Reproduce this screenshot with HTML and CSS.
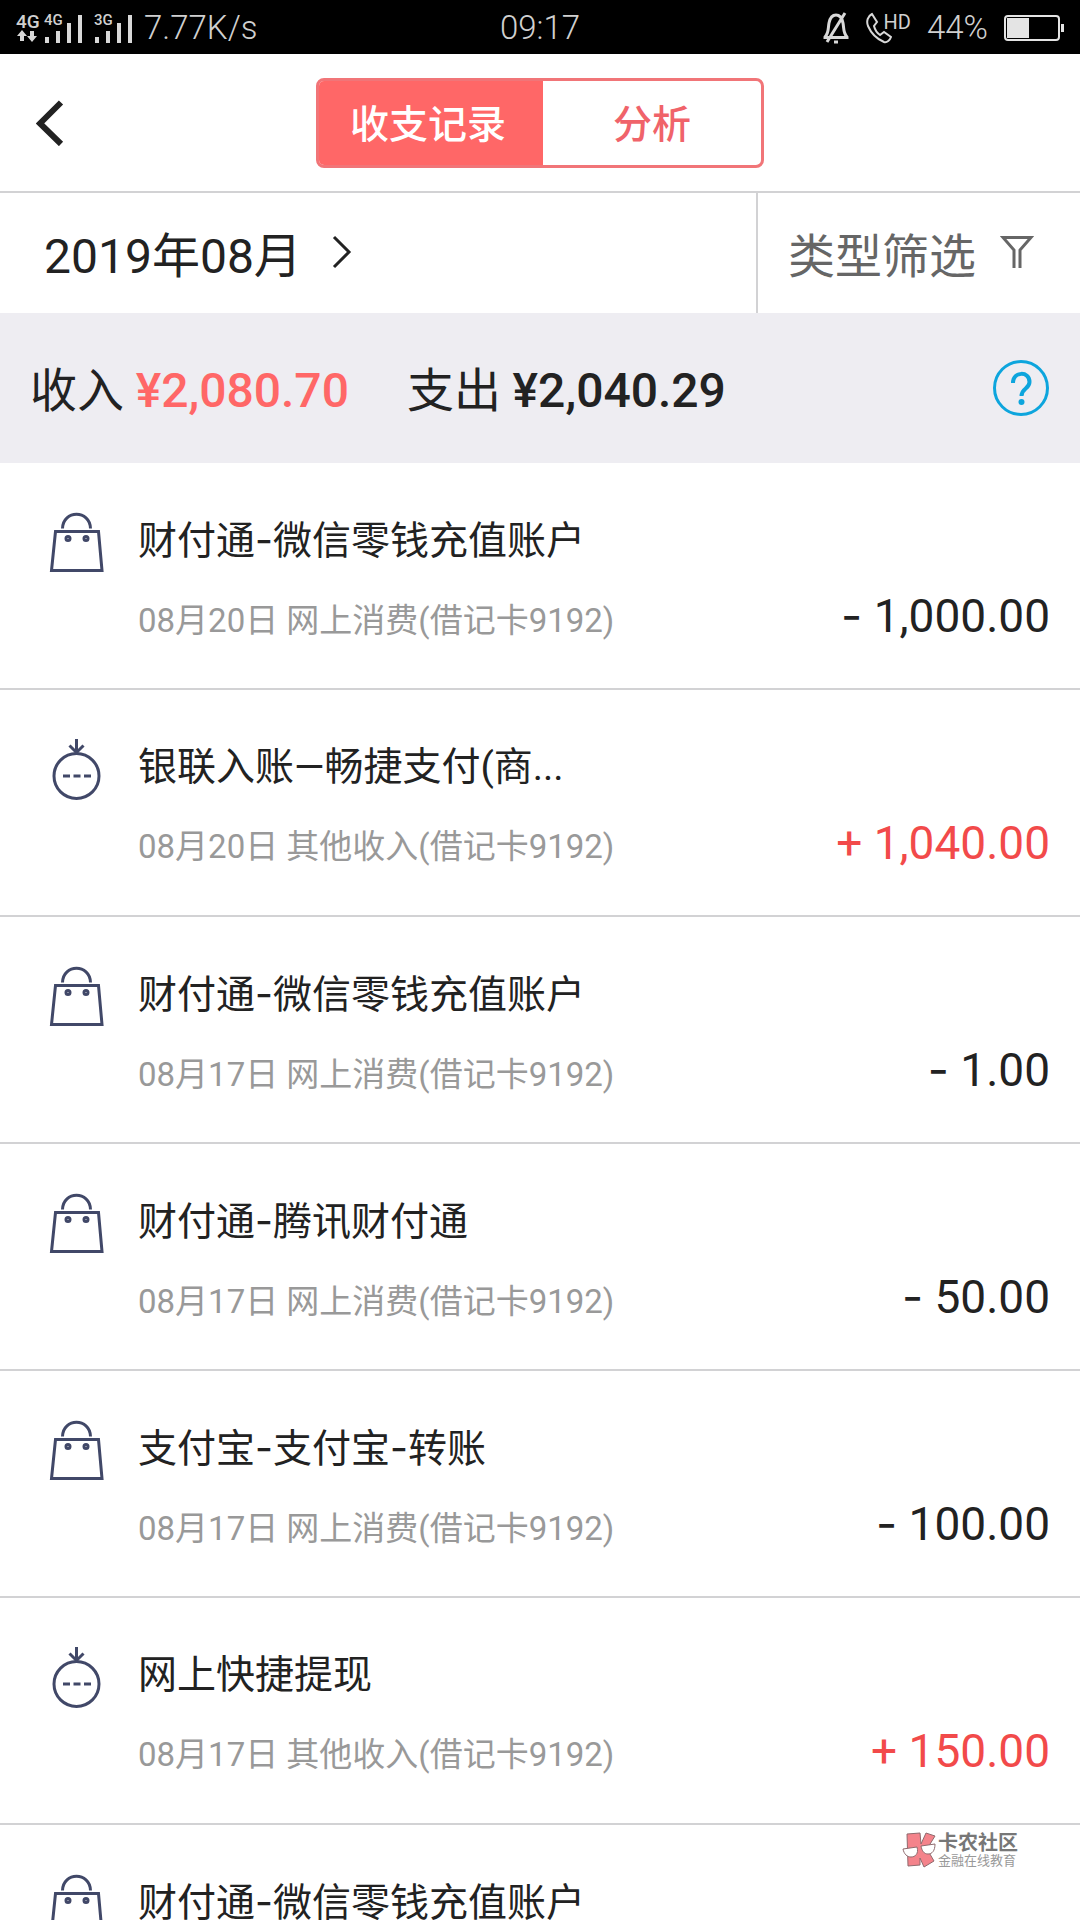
FILE: index.html
```html
<!DOCTYPE html>
<html lang="zh-CN">
<head>
<meta charset="utf-8">
<meta name="viewport" content="width=device-width, initial-scale=1">
<title>收支记录</title>
<link rel="stylesheet" href="styles.css">
</head>
<body>
<svg class="defs" aria-hidden="true">
  <symbol id="bag" viewBox="0 0 56 62">
    <path d="M13.500 17.500C14 -1.500 41 -1.500 41.500 17.500M6.500 20.500H49.500L53 59.500H2.500Z"/>
    <circle cx="19" cy="27.500" r="2"/><circle cx="37" cy="27.500" r="2"/>
  </symbol>
  <symbol id="coin" viewBox="0 0 56 62">
    <circle cx="27.500" cy="38" r="22.500"/>
    <path d="M27.500 1V14M20.500 7.500L27.500 14.500L34.500 7.500M14 38H21M24.500 38H31.500M35 38H42"/>
  </symbol>
</svg>
<div class="app">
  <header class="status">
    <div class="status-left">
      <div class="net"><span class="net-main">4G</span>
        <svg width="22" height="12" viewBox="0 0 22 12" fill="#d8d8d8"><path d="M6 0L11 6H8V11H4V6H1ZM16 12L21 6H18V1H14V6H11Z"/></svg>
      </div>
      <div class="signal"><span class="net-tag">4G</span>
        <svg width="38" height="30" viewBox="0 0 38 30" fill="#d8d8d8"><path d="M1 24H5V30H1ZM12 18H16V30H12ZM23 10H27V30H23ZM34 2H38V30H34Z"/></svg>
      </div>
      <div class="signal"><span class="net-tag">3G</span>
        <svg width="38" height="30" viewBox="0 0 38 30" fill="#d8d8d8"><path d="M1 24H5V30H1ZM12 18H16V30H12ZM23 10H27V30H23ZM34 2H38V30H34Z"/></svg>
      </div>
      <span class="speed">7.77K/s</span>
    </div>
    <span>09:17</span>
    <div class="status-right">
      <svg width="28" height="32" viewBox="0 0 28 32" fill="none" stroke="#d8d8d8" stroke-width="3"><path d="M3 25C7 21 6 16 7 11C8 6 10 3 14 3S20 6 21 11C22 16 21 21 25 25V25.500H3ZM23 1L5 30"/><path d="M12 30H16" stroke-width="3"/></svg>
      <div class="call">
        <svg width="26" height="32" viewBox="0 0 26 32" fill="none" stroke="#d8d8d8" stroke-width="2"><path d="M6 2C2 4 0 9 2 14C5 21 11 27 18 30C21 31 24 28 25 25L18 20L14 23C11 21 9 18 8 14L11 10Z"/></svg>
        <span class="hd">HD</span>
      </div>
      <span class="percent">44%</span>
      <svg width="60" height="28" viewBox="0 0 60 28"><rect x="1" y="2" width="54" height="24" rx="3" fill="none" stroke="#e4e4e4" stroke-width="2"/><path d="M3 4H25V24H3ZM57 10H60V18H57Z" fill="#e4e4e4"/></svg>
    </div>
  </header>

  <nav class="nav">
    <button class="back" aria-label="返回"><svg width="32" height="46" viewBox="0 0 32 46" fill="none" stroke="#222" stroke-width="6"><path d="M25 2.500L4 23.500L25 44"/></svg></button>
    <div class="tabs">
      <button class="tab tab-on">收支记录</button>
      <button class="tab">分析</button>
    </div>
  </nav>

  <section class="filters">
    <button class="month">2019年08月
      <svg width="20" height="34" viewBox="0 0 20 34" fill="none" stroke="#222" stroke-width="3"><path d="M2 2L17 17L2 32"/></svg>
    </button>
    <button class="type">类型筛选
      <svg width="34" height="34" viewBox="0 0 34 34" fill="none" stroke="#666" stroke-width="3"><path d="M14 33V15L3 2.500H31L20 15V33"/></svg>
    </button>
  </section>

  <section class="summary">
    <div class="total">收入 <strong class="sum income">¥2,080.70</strong></div>
    <div class="total">支出 <strong class="sum">¥2,040.29</strong></div>
    <button class="help" aria-label="帮助"><svg width="58" height="58" viewBox="0 0 58 58" fill="none" stroke="#0da5dd"><circle cx="29" cy="29" r="26.500" stroke-width="3"/><path d="M21 24C21 12 37.500 12 37.500 23C37.500 30 29.500 29 29.500 37" stroke-width="4"/><circle cx="29.500" cy="43" r="3" fill="#0da5dd" stroke="none"/></svg></button>
  </section>

  <ul class="list">
    <li class="row"><svg class="icon"><use href="#bag"/></svg><div class="info"><h2>财付通<span class="dash">-</span>微信零钱充值账户</h2><p>08月20日 网上消费(借记卡9192)</p></div><span class="amount"><span class="dash">-</span> 1,000.00</span></li>
    <li class="row"><svg class="icon"><use href="#coin"/></svg><div class="info"><h2>银联入账—畅捷支付(商...</h2><p>08月20日 其他收入(借记卡9192)</p></div><span class="amount plus">+ 1,040.00</span></li>
    <li class="row"><svg class="icon"><use href="#bag"/></svg><div class="info"><h2>财付通<span class="dash">-</span>微信零钱充值账户</h2><p>08月17日 网上消费(借记卡9192)</p></div><span class="amount"><span class="dash">-</span> 1.00</span></li>
    <li class="row"><svg class="icon"><use href="#bag"/></svg><div class="info"><h2>财付通<span class="dash">-</span>腾讯财付通</h2><p>08月17日 网上消费(借记卡9192)</p></div><span class="amount"><span class="dash">-</span> 50.00</span></li>
    <li class="row"><svg class="icon"><use href="#bag"/></svg><div class="info"><h2>支付宝<span class="dash">-</span>支付宝<span class="dash">-</span>转账</h2><p>08月17日 网上消费(借记卡9192)</p></div><span class="amount"><span class="dash">-</span> 100.00</span></li>
    <li class="row"><svg class="icon"><use href="#coin"/></svg><div class="info"><h2>网上快捷提现</h2><p>08月17日 其他收入(借记卡9192)</p></div><span class="amount plus">+ 150.00</span></li>
    <li class="row"><svg class="icon"><use href="#bag"/></svg><div class="info"><h2>财付通<span class="dash">-</span>微信零钱充值账户</h2></div></li>
  </ul>

  <div class="brand">
    <svg width="34" height="36" viewBox="0 0 34 36" stroke="#8f6a6e" stroke-width="1"><path d="M5 2L18 1L19 12L24 1L33 4L25 17L32 29L22 35L18 26V33L6 34Z" fill="#f4838b"/><path d="M1 17L15 15C17 22 13 25 9 25C5 25 2 22 1 17ZM19 14L33 12C33 19 30 22 26 22C22 22 20 19 19 14Z" fill="#fff"/></svg>
    <div><div class="brand-name">卡农社区</div><div class="brand-sub">金融在线教育</div></div>
  </div>
</div>
</body>
</html>
```
FILE: styles.css
```css
* { box-sizing: border-box; margin: 0; padding: 0; }
body {
  background: #fff;
  color: #222;
  font-family: Roboto, "Noto Sans CJK SC", sans-serif;
  font-weight: 400;
}
button { border: 0; background: none; font: inherit; color: inherit; cursor: pointer; }
svg { display: block; flex: none; }
.defs { position: absolute; width: 0; height: 0; }
.app { position: relative; display: flex; flex-direction: column; height: 100vh; overflow: hidden; }

.status {
  flex: none;
  display: grid;
  grid-template-columns: 1fr auto 1fr;
  align-items: center;
  height: 54px;
  padding: 2px 16px 0;
  background: #000;
  color: #d0d0d0;
  font-size: 33px;
  font-weight: 300;
  line-height: 40px;
}
.status-left, .status-right { display: flex; align-items: center; }
.status-right { justify-content: flex-end; gap: 16px; }
.net { width: 28px; }
.net-main { display: block; font-size: 19px; line-height: 16px; font-weight: 500; }
.signal { position: relative; margin-right: 12px; }
.net-tag { position: absolute; left: 0; top: 0; font-size: 15px; line-height: 15px; font-weight: 500; }
.call { display: flex; }
.hd { margin-left: -8px; font-size: 20px; line-height: 20px; font-weight: 400; }

.nav {
  flex: none;
  display: grid;
  grid-template-columns: 1fr auto 1fr;
  align-items: center;
  height: 139px;
  padding: 0 36px;
  border-bottom: 2px solid #d2d2d4;
}
.back { justify-self: start; }
.tabs { display: flex; width: 448px; height: 90px; border: 3px solid #f17578; border-radius: 8px; overflow: hidden; }
.tab { flex: 1; padding-bottom: 4px; color: #f0636a; font-size: 39px; font-weight: 500; }
.tab-on { flex: 0 0 224px; padding-right: 6px; background: #ff6767; color: #fff; }

.filters { flex: none; display: flex; height: 120px; font-size: 47px; }
.month { flex: 1; display: flex; align-items: center; gap: 30px; padding: 0 0 2px 44px; font-size: 48px; }
.type { display: flex; align-items: center; gap: 24px; padding: 0 46px 2px 30px; border-left: 2px solid #d2d2d4; color: #666; }

.summary { flex: none; display: flex; align-items: center; gap: 58px; height: 150px; padding: 0 30px; background: #eeedf2; font-size: 47px; }
.total { padding-bottom: 4px; }
.sum { font-size: 48px; font-weight: 500; }
.income { color: #ff6767; }
.help { margin-left: auto; }

.list { flex: 1; min-height: 0; overflow: hidden; list-style: none; }
.row { display: flex; height: 227px; padding: 48px 30px 44px 49px; border-bottom: 2px solid #d2d2d4; }
.icon { width: 56px; height: 62px; margin-right: 33px; fill: none; stroke: #414868; stroke-width: 3; }
.info { flex: 1; display: flex; flex-direction: column; gap: 27px; white-space: nowrap; }
.info h2 { font-size: 39px; line-height: 58px; font-weight: inherit; }
.info p { font-size: 33px; line-height: 48px; color: #999; }
.amount { align-self: flex-end; font-size: 46px; line-height: 56px; white-space: nowrap; }
.plus { color: #f24a4a; }
.dash { font-family: Inter, sans-serif; }

.brand { position: absolute; right: 62px; bottom: 52px; display: flex; align-items: center; gap: 2px; color: #777; }
.brand-name { font-size: 20px; line-height: 22px; font-weight: 700; }
.brand-sub { font-size: 13px; line-height: 14px; color: #999; }
```
